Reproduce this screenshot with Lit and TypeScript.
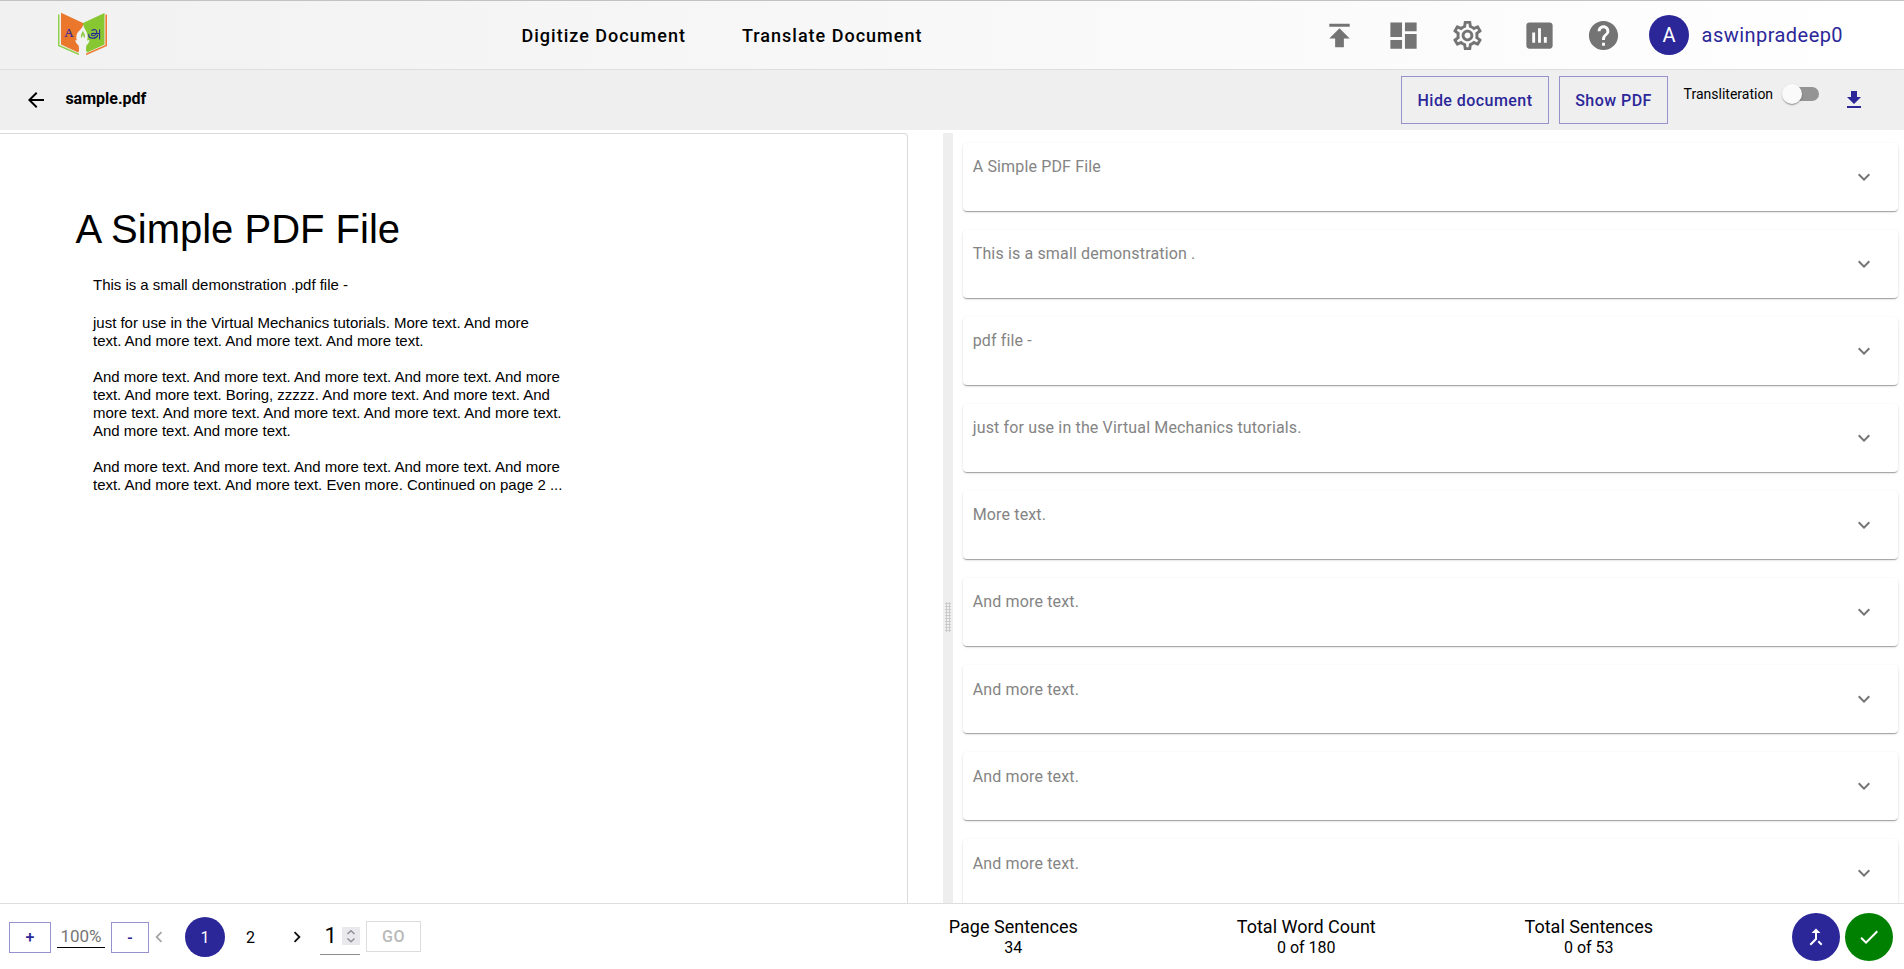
import { LitElement, html, css, svg } from "lit";
import { customElement, property } from "lit/decorators.js";

const ICONS = {
  upload: "M5 4v2h14V4H5zm0 10h4v6h6v-6h4l-7-7-7 7z",
  dashboard: "M3 13h8V3H3v10zm0 8h8v-6H3v6zm10 0h8V11h-8v10zm0-18v6h8V3h-8z",
  settings: "M19.43 12.98c.04-.32.07-.64.07-.98 0-.34-.03-.66-.07-.98l2.11-1.65c.19-.15.24-.42.12-.64l-2-3.46c-.09-.16-.26-.25-.44-.25-.06 0-.12.01-.17.03l-2.49 1c-.52-.4-1.08-.73-1.69-.98l-.38-2.65C14.46 2.18 14.25 2 14 2h-4c-.25 0-.46.18-.49.42l-.38 2.65c-.61.25-1.17.59-1.69.98l-2.49-1c-.06-.02-.12-.03-.18-.03-.17 0-.34.09-.43.25l-2 3.46c-.13.22-.07.49.12.64l2.11 1.65c-.04.32-.07.65-.07.98 0 .33.03.66.07.98l-2.11 1.65c-.19.15-.24.42-.12.64l2 3.46c.09.16.26.25.44.25.06 0 .12-.01.17-.03l2.49-1c.52.4 1.08.73 1.69.98l.38 2.65c.03.24.24.42.49.42h4c.25 0 .46-.18.49-.42l.38-2.65c.61-.25 1.17-.59 1.69-.98l2.49 1c.06.02.12.03.18.03.17 0 .34-.09.43-.25l2-3.46c.12-.22.07-.49-.12-.64l-2.11-1.65zm-1.98-1.71c.04.31.05.52.05.73 0 .21-.02.43-.05.73l-.14 1.13.89.7 1.08.84-.7 1.21-1.27-.51-1.04-.42-.9.68c-.43.32-.84.56-1.25.73l-1.06.43-.16 1.13-.2 1.35h-1.4l-.19-1.35-.16-1.13-1.06-.43c-.43-.18-.83-.41-1.23-.71l-.91-.7-1.06.43-1.27.51-.7-1.21 1.08-.84.89-.7-.14-1.13c-.03-.31-.05-.54-.05-.74s.02-.43.05-.73l.14-1.13-.89-.7-1.08-.84.7-1.21 1.27.51 1.04.42.9-.68c.43-.32.84-.56 1.25-.73l1.06-.43.16-1.13.2-1.35h1.39l.19 1.35.16 1.13 1.06.43c.43.18.83.41 1.23.71l.91.7 1.06-.43 1.27-.51.7 1.21-1.07.85-.89.7.14 1.13zM12 8c-2.21 0-4 1.79-4 4s1.79 4 4 4 4-1.79 4-4-1.79-4-4-4zm0 6c-1.1 0-2-.9-2-2s.9-2 2-2 2 .9 2 2-.9 2-2 2z",
  chart: "M19 3H5c-1.1 0-2 .9-2 2v14c0 1.1.9 2 2 2h14c1.1 0 2-.9 2-2V5c0-1.1-.9-2-2-2zM9 17H7v-7h2v7zm4 0h-2V7h2v10zm4 0h-2v-4h2v4z",
  help: "M12 2C6.48 2 2 6.48 2 12s4.48 10 10 10 10-4.48 10-10S17.52 2 12 2zm1 17h-2v-2h2v2zm2.07-7.75l-.9.92C13.45 12.9 13 13.5 13 15h-2v-.5c0-1.1.45-2.1 1.17-2.83l1.24-1.26c.37-.36.59-.86.59-1.41 0-1.1-.9-2-2-2s-2 .9-2 2H8c0-2.21 1.79-4 4-4s4 1.79 4 4c0 .88-.36 1.68-.93 2.25z",
  back: "M20 11H7.83l5.59-5.59L12 4l-8 8 8 8 1.41-1.41L7.83 13H20v-2z",
  download: "M19 9h-4V3H9v6H5l7 7 7-7zM5 18v2h14v-2H5z",
  down: "M7.41 8.59L12 13.17l4.59-4.58L18 10l-6 6-6-6 1.41-1.41z",
  left: "M15.41 7.41L14 6l-6 6 6 6 1.41-1.41L10.83 12z",
  right: "M10 6L8.59 7.41 13.17 12l-4.58 4.59L10 18l6-6z",
  merge: "M17 20.41L18.41 19 15 15.59 13.59 17 17 20.41zM7.5 8H11v5.59L5.59 19 7 20.41l6-6V8h3.5L12 3.5 7.5 8z",
  check: "M9 16.17L4.83 12l-1.42 1.41L9 19 21 7l-1.41-1.41z",
};

type IconName = keyof typeof ICONS;

@customElement("ui-icon")
class UiIcon extends LitElement {
  @property() name: IconName = "check";
  static styles = css`
    :host { display: block; flex: none; width: 24px; height: 24px; }
    .glyph { display: block; width: 100%; height: 100%; fill: currentColor; }
  `;
  render() {
    return html`<svg class="glyph" viewBox="0 0 24 24">${svg`<path d=${ICONS[this.name]}></path>`}</svg>`;
  }
}

@customElement("book-logo")
class BookLogo extends LitElement {
  static styles = css`
    :host { display: block; flex: none; width: 50px; height: 44px; }
    .art { display: block; }
    .latin { font: 13px "Liberation Serif", serif; fill: #2c2799; stroke: #2c2799; stroke-width: 0.2; }
    .tamil { fill: none; stroke: #2c2799; stroke-width: 1.1; stroke-linecap: round; stroke-linejoin: round; }
  `;
  render() {
    return html`<svg class="art" width="50" height="44" viewBox="0 0 50 44">
      <path fill="#8fd14b" d="M0 2.500h1.500v30.500L21 41.500v1.700L0 34z"></path>
      <path fill="#f07a32" d="M49 2.500h-1.600v30.500L28 41.500v1.700L49 34z"></path>
      <path fill="#ea772c" d="M3 .8L25 11v20l-4.800 9.500L3 32.500z"></path>
      <path fill="#87c832" d="M46.500 1L25 11v20l4 9.500 17.500-8z"></path>
      <path fill="#f2f2f2" d="M25.200 12.500c.6 4.500 4 6.500 4.400 11.500.1 2-.2 3.500-.6 4.500l2.500-.6c-.4 2.600-1.600 4.200-2.900 5.200-.9 2.500-.6 7-.4 10.400h-7.400c.2-3.400.5-7.900-.4-10.400-1.500-1-2.700-2.600-3.200-5.200l1.700.6c-.8-2-.8-4.500 0-6.500 1.500-3.500 5.400-5 6.300-9.500z"></path>
      <path fill="#8fcb45" d="M25 18.500c.3 2 2.300 3.500 2 6-.1.900-.6 1.500-1 1.800.2-1.600-.8-2.300-1.300-3.300-.2 1.300-1 2-.9 3.300-2.200-2.300.2-5.300 1.200-7.800z"></path>
      <text class="latin" x="6.300" y="25.300">A</text>
      <path class="tamil" d="M34 18.200c2.200-1 4.800-.6 4.800 1.800s-2.300 4-4.300 3.700c-1.600-.4-1.200-2.300.4-2.300 2.200 0 4.300.5 6.700-.2M30.800 22.400c-.6 2.500 1.200 3.800 3.700 3.800 3 0 4.800-1.200 5.300-3.200M41.600 17.800v9.200"></path>
    </svg>`;
  }
}

@customElement("sentence-card")
class SentenceCard extends LitElement {
  @property() text = "";
  static styles = css`
    :host {
      display: flex; justify-content: space-between; box-sizing: border-box;
      flex: none; height: 68.06px; padding: 12.24px 22px 0 9.700px; border-radius: 4px; background: #fff;
      box-shadow: 0 2px 1px -1px rgba(0,0,0,.2), 0 1px 1px rgba(0,0,0,.14), 0 1px 3px rgba(0,0,0,.12);
    }
    .text { font-size: 16px; line-height: 24px; letter-spacing: 0.15px; color: #848484; }
    .arrow { margin-top: 9.700px; color: #757575; }
  `;
  render() {
    return html`<span class="text">${this.text}</span><ui-icon class="arrow" name="down"></ui-icon>`;
  }
}

const SENTENCES = [
  "A Simple PDF File",
  "This is a small demonstration .",
  "pdf file -",
  "just for use in the Virtual Mechanics tutorials.",
  "More text.",
  "And more text.",
  "And more text.",
  "And more text.",
  "And more text.",
];

const PARAGRAPHS = [
  ["This is a small demonstration .pdf file -"],
  [
    "just for use in the Virtual Mechanics tutorials. More text. And more",
    "text. And more text. And more text. And more text.",
  ],
  [
    "And more text. And more text. And more text. And more text. And more",
    "text. And more text. Boring, zzzzz. And more text. And more text. And",
    "more text. And more text. And more text. And more text. And more text.",
    "And more text. And more text.",
  ],
  [
    "And more text. And more text. And more text. And more text. And more",
    "text. And more text. And more text. Even more. Continued on page 2 ...",
  ],
];

const STATS = [
  ["Page Sentences", "34"],
  ["Total Word Count", "0 of 180"],
  ["Total Sentences", "0 of 53"],
];

@customElement("app-root")
class AppRoot extends LitElement {
  static styles = css`
    :host {
      display: flex; flex-direction: column; width: 100%; height: 100vh; overflow: hidden;
      font-family: Roboto, sans-serif; color: #000; background: #fff;
    }
    * { box-sizing: border-box; }
    .header {
      flex: none; display: flex; align-items: center; height: 70px;
      border-top: 1px solid #c2c2c2; border-bottom: 1px solid #dedede;
      background: linear-gradient(to right, #f1f1f1, #fff);
    }
    .logo { margin: -2px 0 0 58px; }
    .nav { display: flex; margin: 2px 0 0 413.500px; gap: 56px; font-size: 18px; font-weight: 500; letter-spacing: 1px; line-height: 24px; }
    .tools { display: flex; align-items: center; margin-left: auto; color: #747474; }
    .tool { width: 35px; height: 35px; margin-right: 29px; }
    .tool.wide { margin-right: 37px; }
    .tool.last { margin-right: 28px; }
    .avatar {
      display: flex; align-items: center; justify-content: center; width: 40px; height: 40px;
      border-radius: 50%; background: #2c2799; color: #fff; font-size: 20px; margin-right: 12.600px;
    }
    .user { width: 202.400px; font-size: 20px; letter-spacing: 0.45px; color: #2c2799; }
    .bar { flex: none; display: flex; align-items: flex-start; height: 60px; background: #efefef; }
    .back { margin: 18px 0 0 24px; }
    .file { margin: 17px auto 0 17.400px; font-size: 16px; font-weight: 700; line-height: 24px; }
    .outlined {
      display: flex; align-items: center; justify-content: center; height: 48px; margin-top: 6px;
      border: 1px solid #9592cc; color: #2c2799; font-size: 16px; font-weight: 500; letter-spacing: 0.45px;
    }
    .hide { width: 148px; margin-right: 10px; }
    .show { width: 109px; margin-right: 15.600px; }
    .switch-label { margin-top: 14px; font-size: 14px; line-height: 20px; letter-spacing: 0; width: 97.900px; }
    .switch { display: flex; align-items: center; margin-top: 14px; width: 38.500px; height: 20px; }
    .track { flex: none; width: 35px; height: 14px; margin-left: 2px; border-radius: 7px; background: #949494; }
    .thumb {
      flex: none; width: 20px; height: 20px; margin-right: -20px; border-radius: 50%; background: #fafafa; z-index: 1;
      box-shadow: 0 2px 1px -1px rgba(0,0,0,.2), 0 1px 1px rgba(0,0,0,.14), 0 1px 3px rgba(0,0,0,.12);
    }
    .download { margin: 18px 38px 0 22px; color: #2c2799; }
    .main { flex: 1; min-height: 0; display: flex; padding-top: 3px; overflow: hidden; }
    .page {
      flex: none; width: 908px; border: 1px solid #dbdbdb; border-left: 0; border-bottom: 0;
      border-top-right-radius: 4px; padding: 72px 0 0 75.500px; font-family: "Liberation Sans", Arial, sans-serif;
    }
    .title { font-size: 40px; line-height: 46px; white-space: nowrap; }
    .para { margin: 18px 0 0 17.500px; font-size: 15px; line-height: 18px; letter-spacing: -0.025px; white-space: nowrap; }
    .para.lead { margin-top: 24px; margin-bottom: 20px; }
    .para.lead + .para { margin-top: 20px; letter-spacing: -0.01px; }
    .splitter {
      flex: none; display: flex; align-items: flex-start; justify-content: center;
      width: 10px; margin: 0 10px 0 35px; background: #eee; padding-top: 469px;
    }
    .grip { width: 6px; height: 30px; background: radial-gradient(circle, #c0c0c0 0.9px, transparent 1.2px) 0 0 / 3px 3px; }
    .cards { flex: 1; display: flex; flex-direction: column; gap: 19px; margin-left: -4px; padding: 10px 6px 0 4px; overflow: hidden; }
    .footer { flex: none; display: flex; align-items: flex-start; height: 66px; border-top: 1px solid #dedede; }
    .zoom { height: 31px; margin-top: 18px; letter-spacing: 0; }
    .plus { width: 42px; margin-left: 9px; }
    .minus { width: 38px; }
    .percent {
      width: 48px; height: 24px; margin: 20px 6px 0; border-bottom: 1px solid #000; color: #757575;
      font-size: 17px; line-height: 25px; text-align: center;
    }
    .pager { display: flex; align-items: center; height: 40px; margin-top: 13px; font-size: 16px; }
    .prev { color: #a6a6a6; width: 22px; height: 22px; margin-left: -1px; }
    .current {
      display: flex; align-items: center; justify-content: center; width: 40px; height: 40px;
      border-radius: 50%; background: #2c2799; color: #fff; margin-left: 15px;
    }
    .next-page { width: 40px; margin-left: 5.500px; margin-right: .5px; text-align: center; }
    .next { width: 22px; height: 22px; margin-left: 15px; color: #111; }
    .goto {
      display: flex; align-items: center; justify-content: space-between; width: 40px; height: 38px;
      margin: 13px 6px 0 12px; padding-left: 4.500px; border-bottom: 1px solid #8c8c8c; font-size: 22px;
    }
    .spin { width: 18px; height: 18px; background: #e9e8ed; display: block; }
    .go { width: 55px; height: 31px; margin-top: 17px; border-color: #dcdcdc; color: #b9b9b9; }
    .stats { display: grid; grid-template-columns: 288px 298px 267px; margin-left: 448.300px; }
    .stat { display: flex; flex-direction: column; align-items: center; margin-top: 11px; }
    .stat-name { font-size: 18px; line-height: 24px; }
    .stat-value { font-size: 16px; line-height: 18px; }
    .actions { display: flex; gap: 5px; margin: 9px 11px 0 auto; }
    .action {
      display: flex; align-items: center; justify-content: center; width: 48px; height: 48px;
      border-radius: 50%; color: #fff; background: #2c2799;
    }
    .action.done { background: #008000; }
  `;

  render() {
    return html`
      <header class="header">
        <book-logo class="logo"></book-logo>
        <nav class="nav"><span>Digitize Document</span><span>Translate Document</span></nav>
        <div class="tools">
          <ui-icon class="tool" name="upload"></ui-icon>
          <ui-icon class="tool" name="dashboard"></ui-icon>
          <ui-icon class="tool wide" name="settings"></ui-icon>
          <ui-icon class="tool" name="chart"></ui-icon>
          <ui-icon class="tool last" name="help"></ui-icon>
          <div class="avatar">A</div>
          <div class="user">aswinpradeep0</div>
        </div>
      </header>
      <div class="bar">
        <ui-icon class="back" name="back"></ui-icon>
        <span class="file">sample.pdf</span>
        <div class="outlined hide">Hide document</div>
        <div class="outlined show">Show PDF</div>
        <span class="switch-label">Transliteration</span>
        <div class="switch"><span class="thumb"></span><span class="track"></span></div>
        <ui-icon class="download" name="download"></ui-icon>
      </div>
      <main class="main">
        <section class="page">
          <div class="title">A Simple PDF File</div>
          ${PARAGRAPHS.map(
            (lines, i) => html`<div class="para ${i === 0 ? "lead" : ""}">${lines.map((l) => html`<div>${l}</div>`)}</div>`
          )}
        </section>
        <div class="splitter"><span class="grip"></span></div>
        <section class="cards">
          ${SENTENCES.map((s) => html`<sentence-card .text=${s}></sentence-card>`)}
        </section>
      </main>
      <footer class="footer">
        <div class="outlined zoom plus">+</div>
        <div class="percent">100%</div>
        <div class="outlined zoom minus">-</div>
        <div class="pager">
          <ui-icon class="prev" name="left"></ui-icon>
          <span class="current">1</span>
          <span class="next-page">2</span>
          <ui-icon class="next" name="right"></ui-icon>
        </div>
        <div class="goto">
          <span>1</span>
          <svg class="spin" viewBox="0 0 18 18" fill="none" stroke="#8f8f9b" stroke-width="1.500">
            <path d="M5.500 7L9 3.800 12.500 7M5.500 11.500L9 14.700l3.500-3.200"></path>
          </svg>
        </div>
        <div class="outlined go">GO</div>
        <div class="stats">
          ${STATS.map(
            ([name, value]) => html`<div class="stat"><span class="stat-name">${name}</span><span class="stat-value">${value}</span></div>`
          )}
        </div>
        <div class="actions">
          <div class="action"><ui-icon name="merge"></ui-icon></div>
          <div class="action done"><ui-icon name="check"></ui-icon></div>
        </div>
      </footer>
    `;
  }
}
